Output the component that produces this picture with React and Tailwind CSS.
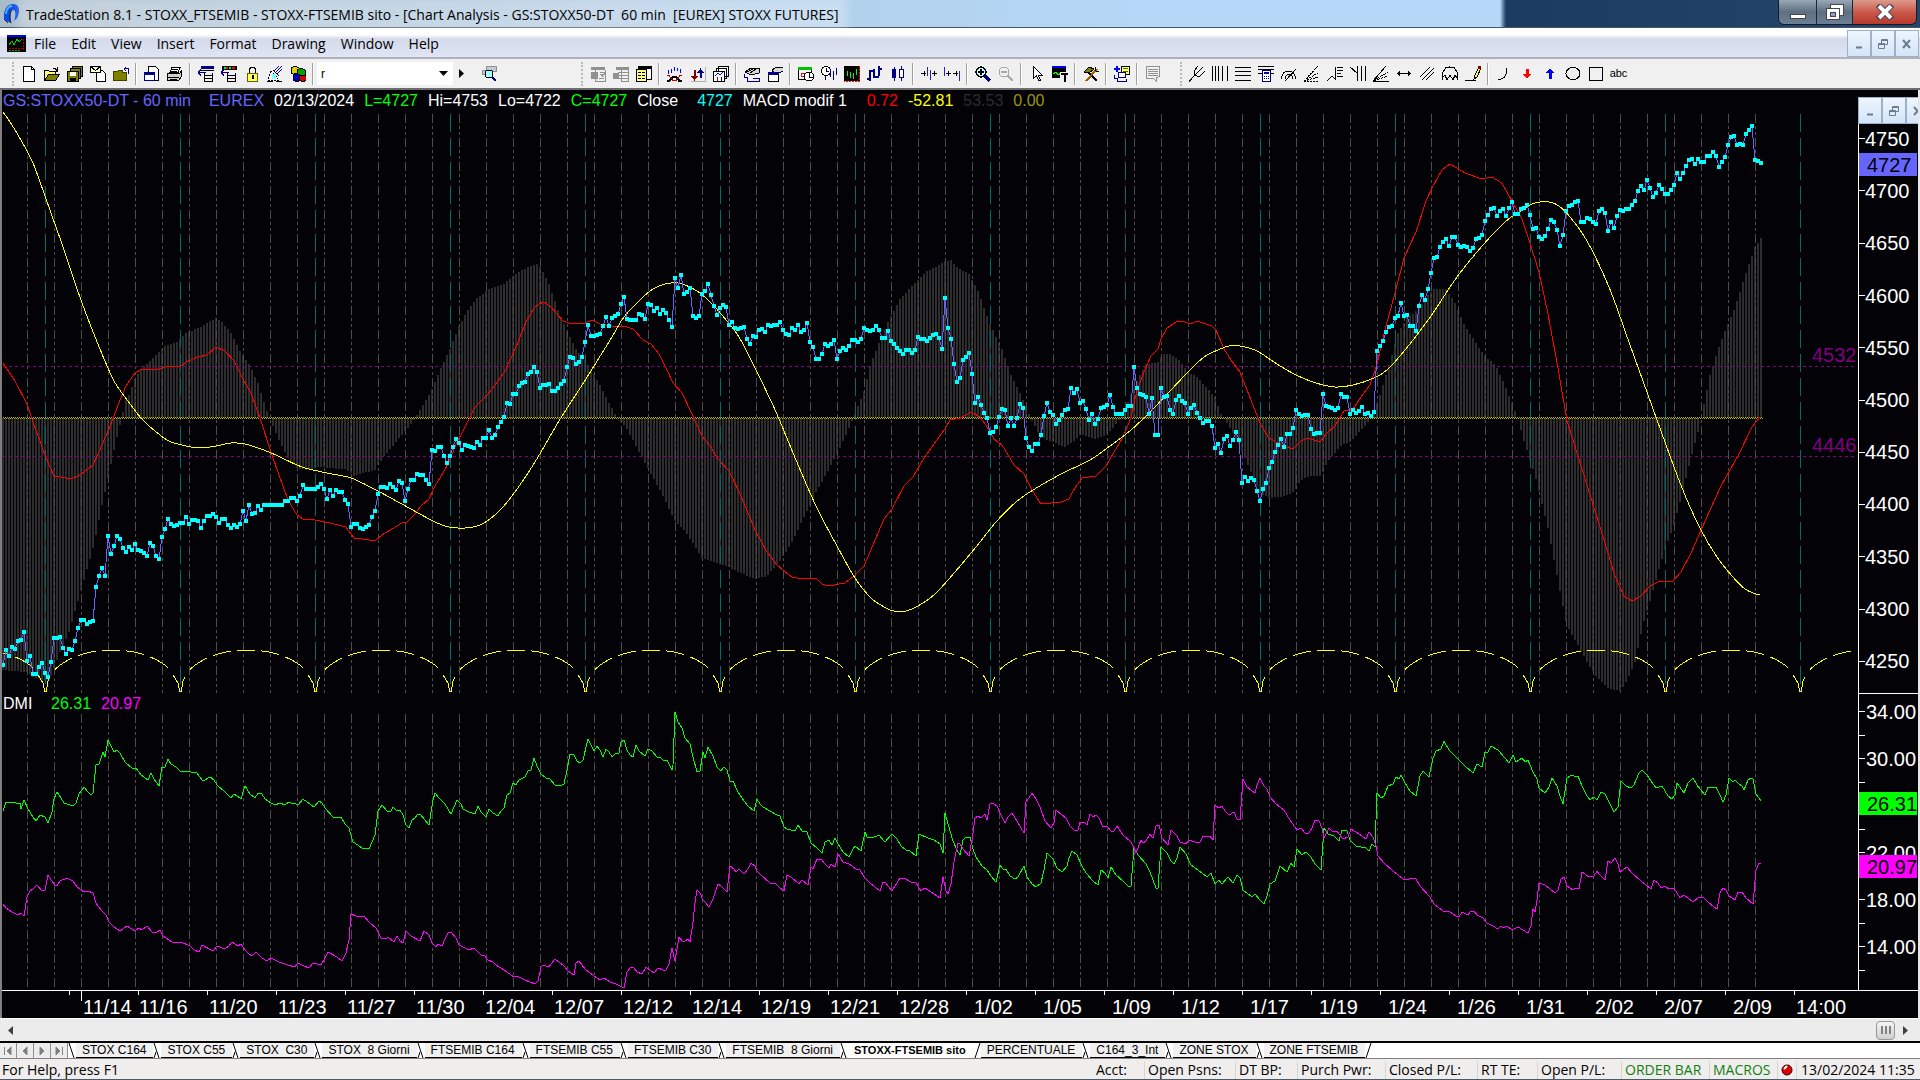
import React from 'react';
import clsx from 'clsx';

/* ---------- chart data ---------- */

// hourly close, one value per bar, 10 bars per line
const closeBars = [
  665, 650, 656, 647, 649, 641, 640, 632, 661, 656,
  674, 674, 667, 663, 673, 677, 662, 638, 638, 637,
  648, 654, 649, 650, 641, 628, 620, 620, 624, 622,
  621, 587, 576, 568, 576, 536, 554, 546, 536, 539,
  548, 552, 547, 550, 544, 550, 551, 553, 556, 543,
  546, 556, 559, 537, 529, 519, 524, 526, 525, 523,
  523, 517, 524, 520, 520, 521, 528, 521, 516, 516,
  514, 517, 523, 519, 519, 525, 528, 525, 527, 524,
  511, 521, 505, 514, 513, 506, 510, 505, 505, 505,
  505, 505, 505, 505, 501, 501, 498, 498, 501, 496,
  485, 489, 489, 489, 489, 487, 484, 489, 499, 490,
  496, 490, 492, 492, 500, 504, 527, 524, 524, 528,
  529, 527, 525, 517, 511, 494, 487, 487, 488, 484,
  487, 490, 481, 483, 501, 489, 480, 480, 474, 475,
  475, 480, 484, 450, 451, 447, 447, 456, 463, 456,
  447, 439, 443, 450, 445, 446, 447, 448, 442, 445,
  438, 438, 430, 438, 435, 427, 422, 417, 403, 404,
  394, 394, 386, 383, 382, 374, 372, 367, 372, 388,
  385, 385, 384, 391, 391, 388, 384, 381, 367, 357,
  358, 364, 362, 357, 342, 325, 336, 336, 335, 334,
  326, 317, 326, 318, 316, 314, 304, 297, 319, 320,
  320, 320, 314, 315, 319, 304, 305, 311, 308, 314,
  310, 313, 320, 327, 278, 288, 275, 294, 292, 288,
  316, 318, 316, 294, 291, 284, 295, 306, 315, 308,
  305, 307, 325, 322, 328, 329, 328, 327, 339, 344,
  336, 337, 330, 329, 332, 325, 326, 325, 325, 322,
  330, 334, 335, 328, 330, 325, 332, 330, 323, 342,
  347, 359, 359, 354, 344, 346, 344, 340, 359, 351,
  348, 350, 346, 340, 340, 342, 339, 328, 330, 331,
  330, 326, 330, 338, 338, 331, 341, 344, 348, 351,
  354, 350, 350, 353, 350, 337, 339, 339, 341, 338,
  335, 334, 338, 349, 298, 328, 339, 364, 382, 378,
  360, 357, 353, 374, 403, 397, 405, 413, 418, 433,
  432, 427, 417, 409, 410, 426, 418, 426, 418, 404,
  408, 438, 447, 451, 444, 444, 435, 416, 403, 412,
  415, 424, 420, 415, 410, 409, 388, 393, 389, 403,
  401, 409, 420, 414, 424, 419, 408, 407, 405, 395,
  407, 414, 414, 414, 410, 406, 406, 367, 388, 394,
  395, 397, 414, 398, 435, 435, 388, 397, 396, 410,
  414, 400, 396, 401, 403, 414, 408, 405, 413, 418,
  423, 421, 421, 426, 448, 444, 453, 439, 436, 446,
  440, 432, 440, 483, 477, 481, 478, 480, 491, 501,
  489, 483, 468, 462, 452, 445, 439, 447, 434, 434,
  428, 410, 414, 416, 415, 415, 429, 434, 433, 433,
  394, 406, 407, 408, 410, 408, 394, 397, 397, 414,
  410, 413, 411, 407, 414, 413, 416, 412, 351, 346,
  341, 332, 327, 326, 318, 316, 303, 316, 315, 326,
  326, 331, 306, 295, 300, 289, 273, 258, 257, 247,
  242, 239, 246, 237, 237, 245, 247, 246, 247, 251,
  248, 239, 238, 235, 221, 215, 209, 208, 216, 211,
  209, 216, 208, 202, 214, 214, 209, 208, 205, 215,
  229, 228, 237, 239, 236, 229, 220, 222, 230, 246,
  235, 211, 206, 205, 202, 201, 222, 222, 218, 219,
  222, 224, 211, 209, 213, 231, 222, 228, 216, 210,
  211, 209, 209, 205, 201, 191, 186, 190, 180, 188,
  197, 193, 185, 189, 194, 194, 190, 185, 173, 179,
  173, 166, 160, 159, 164, 159, 162, 162, 156, 156,
  152, 156, 167, 162, 157, 145, 137, 136, 145, 144,
  145, 134, 130, 126, 160, 161, 163,
];

const histPoints = [
  [3, 670], [27, 672], [35, 678], [41, 680], [48, 681], [54, 668], [60, 652], [69, 632], [75, 611], [81, 590], [87, 569],
  [93, 548], [96, 535], [99, 520], [102, 505], [105, 492], [108, 478], [111, 464], [114, 450], [117, 437],
  [120, 425], [123, 412], [126, 400], [129, 395], [135, 379], [141, 369], [150, 361], [165, 346], [177, 342],
  [186, 333], [201, 327], [210, 321], [216, 318], [222, 322], [231, 333], [240, 351], [249, 364], [258, 383],
  [264, 402], [269, 417], [276, 433], [282, 446], [288, 458], [297, 468], [306, 470], [320, 467], [339, 469],
  [346, 469], [354, 476], [363, 473], [375, 470], [384, 456], [396, 442], [412, 423], [416, 417], [426, 400],
  [432, 389], [441, 368], [450, 349], [459, 326], [469, 308], [477, 298], [489, 289], [504, 284], [514, 275],
  [528, 267], [537, 264], [541, 268], [549, 284], [558, 310], [567, 331], [576, 349], [585, 360], [594, 374],
  [604, 393], [616, 416], [627, 429], [636, 446], [648, 468], [660, 490], [675, 521], [686, 532], [702, 558],
  [720, 564], [729, 567], [743, 574], [756, 579], [767, 576], [780, 561], [792, 542], [804, 517], [816, 492],
  [828, 471], [841, 446], [852, 421], [858, 406], [864, 391], [870, 366], [877, 348], [888, 322], [900, 299],
  [912, 286], [926, 272], [941, 264], [945, 261], [951, 260], [957, 267], [969, 274], [978, 291], [990, 324],
  [1002, 349], [1011, 375], [1020, 393], [1026, 406], [1032, 421], [1041, 437], [1053, 442], [1065, 447],
  [1073, 442], [1081, 434], [1096, 439], [1108, 434], [1118, 421], [1124, 414], [1128, 402], [1137, 381],
  [1146, 364], [1158, 362], [1163, 354], [1171, 354], [1179, 360], [1188, 372], [1197, 377], [1204, 385],
  [1215, 397], [1221, 414], [1230, 428], [1240, 446], [1249, 467], [1260, 494], [1270, 498], [1285, 496],
  [1294, 492], [1301, 480], [1309, 476], [1321, 476], [1327, 463], [1340, 446], [1350, 442], [1363, 428],
  [1372, 418], [1379, 398], [1390, 362], [1398, 333], [1407, 318], [1418, 310], [1426, 297], [1434, 289],
  [1446, 289], [1455, 303], [1465, 326], [1483, 354], [1496, 366], [1504, 383], [1513, 406], [1518, 418],
  [1524, 441], [1535, 475], [1548, 528], [1559, 586], [1567, 626], [1578, 645], [1587, 662], [1596, 676],
  [1609, 689], [1621, 691], [1628, 678], [1635, 662], [1643, 624], [1652, 594], [1663, 555], [1674, 525],
  [1682, 494], [1693, 450], [1699, 428], [1704, 404], [1710, 375], [1721, 341], [1734, 310], [1747, 270],
  [1755, 247], [1761, 238],
];

const macdRed = [
  [3, 363], [15, 381], [27, 404], [33, 422], [41, 444], [46, 458], [54, 476], [61, 477], [71, 479], [80, 475],
  [93, 465], [99, 452], [108, 431], [114, 416], [120, 400], [126, 386], [135, 373], [142, 369], [150, 370],
  [159, 369], [168, 366], [180, 367], [186, 362], [198, 357], [207, 355], [216, 347], [225, 351], [234, 361],
  [243, 379], [251, 393], [261, 421], [271, 452], [279, 475], [288, 500], [297, 515], [303, 519], [315, 520],
  [330, 523], [346, 527], [354, 538], [369, 540], [375, 541], [382, 535], [392, 529], [402, 523], [407, 522],
  [414, 515], [421, 506], [429, 499], [435, 486], [443, 473], [449, 462], [456, 444], [463, 431], [475, 407],
  [488, 394], [504, 373], [516, 347], [526, 322], [534, 308], [539, 304], [544, 302], [551, 307], [563, 321],
  [569, 323], [576, 323], [585, 323], [592, 320], [600, 324], [612, 326], [624, 326], [633, 329], [643, 340],
  [651, 344], [659, 354], [667, 370], [673, 383], [682, 393], [692, 414], [702, 436], [710, 446], [718, 459],
  [729, 471], [741, 496], [756, 532], [767, 552], [776, 564], [784, 571], [792, 577], [802, 579], [816, 578],
  [822, 584], [828, 586], [845, 583], [853, 577], [864, 566], [870, 552], [884, 519], [892, 509], [904, 486],
  [913, 477], [924, 458], [939, 437], [945, 429], [950, 420], [961, 418], [971, 412], [980, 417], [986, 425],
  [994, 439], [1002, 445], [1014, 465], [1024, 474], [1032, 490], [1041, 504], [1061, 502], [1069, 499],
  [1073, 491], [1082, 478], [1096, 476], [1106, 466], [1114, 452], [1122, 439], [1131, 418], [1137, 390],
  [1144, 372], [1151, 356], [1158, 349], [1161, 339], [1167, 328], [1176, 322], [1182, 321], [1191, 324],
  [1197, 321], [1212, 326], [1216, 330], [1224, 349], [1231, 360], [1240, 372], [1249, 395], [1260, 423],
  [1268, 437], [1283, 446], [1293, 449], [1301, 441], [1308, 438], [1320, 442], [1327, 433], [1335, 426],
  [1344, 411], [1353, 409], [1361, 397], [1370, 385], [1377, 364], [1386, 326], [1395, 293], [1404, 258],
  [1416, 232], [1426, 201], [1433, 186], [1442, 170], [1450, 164], [1457, 168], [1465, 173], [1482, 179],
  [1492, 177], [1502, 183], [1513, 203], [1522, 219], [1529, 240], [1539, 272], [1548, 314], [1558, 368],
  [1567, 421], [1578, 456], [1591, 498], [1604, 540], [1615, 576], [1624, 596], [1632, 601], [1641, 596],
  [1650, 586], [1658, 582], [1673, 581], [1681, 572], [1691, 553], [1706, 519], [1721, 486], [1739, 454],
  [1752, 427], [1760, 417],
];

const macdYellow = [
  [3, 112], [12, 125], [22, 142], [33, 163], [45, 196], [63, 247], [82, 303], [102, 354], [114, 381], [125, 397],
  [141, 418], [155, 431], [169, 441], [186, 446], [200, 448], [216, 446], [231, 443], [245, 444], [261, 449],
  [278, 456], [302, 467], [327, 473], [351, 478], [376, 490], [400, 503], [433, 521], [449, 527], [465, 528],
  [480, 525], [496, 514], [512, 496], [535, 462], [559, 421], [584, 382], [612, 337], [624, 317], [641, 299],
  [653, 289], [665, 284], [678, 283], [692, 288], [706, 298], [722, 315], [739, 337], [757, 372], [776, 412],
  [796, 460], [816, 506], [837, 546], [855, 578], [871, 598], [886, 608], [894, 611], [906, 611], [918, 606],
  [935, 594], [955, 572], [976, 547], [996, 522], [1016, 502], [1033, 490], [1061, 474], [1090, 460],
  [1110, 446], [1131, 430], [1151, 411], [1171, 390], [1188, 372], [1204, 357], [1218, 350], [1229, 346],
  [1240, 346], [1257, 351], [1277, 364], [1296, 375], [1316, 383], [1335, 387], [1353, 385], [1374, 378],
  [1387, 370], [1400, 356], [1413, 340], [1431, 316], [1457, 277], [1483, 245], [1505, 222], [1522, 210],
  [1535, 203], [1549, 202], [1559, 206], [1570, 217], [1587, 241], [1609, 287], [1630, 345], [1652, 406],
  [1674, 467], [1687, 500], [1702, 532], [1717, 557], [1732, 576], [1745, 589], [1756, 594], [1760, 595],
];

const dmiPlus =
  '3,811 6,802 16,803 20,803 21,809 24,800 28,809 33,817 36,821 40,815 45,817 48,823 52,812 54,799 57,792 61,798 64,803 73,806 76,803 79,794 84,787 88,792 91,795 93,793 96,765 99,764 103,752 105,757 108,740 114,752 117,750 120,753 125,762 133,769 136,768 141,775 148,780 151,773 154,779 159,786 162,767 165,767 168,759 171,764 176,767 181,772 189,771 193,773 196,772 203,781 210,777 214,780 217,785 225,792 231,798 234,794 237,796 241,799 245,786 250,794 255,798 258,793 262,794 265,799 271,803 275,805 280,803 285,805 289,802 293,804 294,803 298,805 303,799 307,802 314,807 319,801 322,803 325,808 333,817 341,817 345,824 349,828 353,842 358,845 363,849 366,848 369,849 375,835 378,811 382,805 387,811 391,811 393,807 397,811 400,810 403,815 406,825 409,828 412,820 415,818 418,814 421,815 424,819 429,825 433,800 435,793 439,798 445,804 451,814 457,800 461,804 463,809 469,812 475,814 478,806 481,812 486,817 489,809 493,813 498,816 501,811 504,808 507,795 510,793 513,783 516,785 519,780 525,777 528,771 531,770 534,758 537,766 541,774 546,778 550,779 555,785 560,786 564,784 567,770 570,754 574,755 577,761 580,763 583,760 588,739 592,747 594,751 597,746 600,750 603,757 606,749 609,752 612,757 615,754 619,753 621,742 624,740 627,750 630,755 633,757 636,745 639,751 645,756 648,749 652,751 657,757 660,757 664,761 667,760 672,770 673,765 675,712 678,722 682,728 685,738 690,744 693,757 697,772 700,771 703,752 705,758 708,747 713,756 717,767 721,771 724,767 727,770 730,781 733,781 738,792 744,801 748,806 754,811 757,799 760,804 763,807 770,811 777,815 780,816 784,827 787,829 795,831 798,825 802,831 807,832 811,843 817,848 822,853 825,842 829,840 832,845 835,838 838,844 843,852 849,857 852,851 855,846 861,851 865,832 867,837 872,838 879,835 885,842 892,834 897,839 901,846 906,850 910,851 916,856 919,834 928,838 934,840 940,844 943,853 945,813 948,824 951,834 953,841 957,850 960,855 963,840 966,837 970,837 973,849 976,857 982,866 987,870 991,876 996,882 1000,865 1003,869 1006,869 1010,876 1015,879 1018,877 1024,866 1027,877 1032,884 1036,887 1041,883 1044,870 1047,853 1053,859 1057,868 1062,872 1067,866 1069,858 1072,851 1077,855 1081,864 1086,873 1093,881 1098,885 1101,870 1105,873 1108,878 1111,867 1116,875 1123,881 1128,886 1131,886 1134,848 1138,855 1146,864 1150,872 1153,880 1156,888 1158,888 1161,847 1167,853 1171,861 1174,864 1177,858 1180,847 1186,854 1191,865 1198,870 1207,877 1211,873 1215,884 1219,880 1222,884 1228,877 1233,883 1237,875 1240,878 1243,890 1252,897 1255,894 1260,900 1264,904 1267,896 1270,884 1275,881 1280,866 1287,872 1291,863 1294,867 1297,849 1302,855 1306,852 1311,857 1315,864 1321,870 1324,828 1328,834 1334,836 1339,841 1342,830 1347,831 1350,840 1356,846 1366,848 1369,851 1372,844 1375,847 1377,793 1381,798 1384,796 1388,786 1393,784 1396,777 1399,779 1401,775 1405,783 1410,791 1416,796 1420,776 1423,771 1429,777 1433,758 1436,751 1441,749 1444,741 1449,750 1457,758 1465,766 1473,773 1477,764 1482,767 1485,752 1488,752 1491,746 1498,750 1505,758 1509,763 1513,755 1516,762 1522,758 1525,762 1528,760 1533,772 1537,779 1539,788 1545,793 1549,787 1552,778 1557,786 1560,796 1563,804 1567,778 1572,775 1576,777 1578,776 1582,786 1587,796 1590,800 1594,797 1597,800 1601,792 1605,794 1609,802 1614,812 1618,807 1621,781 1626,786 1631,788 1634,785 1639,773 1642,770 1647,775 1651,781 1656,788 1662,786 1668,796 1672,799 1675,795 1677,783 1684,793 1688,783 1693,778 1697,785 1700,789 1705,795 1708,787 1716,787 1720,795 1723,802 1726,795 1729,778 1733,782 1735,780 1739,784 1742,786 1744,790 1748,780 1751,778 1753,779 1756,794 1761,801';

const dmiMinus =
  '3,904 6,908 12,912 18,915 21,913 24,916 27,897 30,891 33,889 37,885 42,891 45,890 48,875 51,880 55,885 57,886 60,881 67,878 73,881 77,887 84,892 88,891 93,893 96,903 101,910 106,915 109,922 114,927 120,931 127,926 135,931 139,928 142,930 147,926 152,932 157,932 160,930 163,936 172,942 178,943 181,942 190,946 194,950 199,952 202,945 211,950 214,950 217,946 225,949 229,946 232,942 238,946 241,944 245,950 249,954 252,956 256,952 262,958 267,961 271,958 279,962 288,965 295,967 298,963 304,966 309,968 313,963 321,965 325,958 328,952 337,957 342,961 346,953 349,940 351,914 356,916 364,916 370,923 376,928 381,938 386,939 388,937 394,942 397,936 400,941 403,943 406,931 411,936 420,941 424,931 429,935 432,943 436,947 438,944 442,946 445,939 448,933 451,932 456,938 459,945 469,950 474,948 481,955 484,955 488,960 493,962 496,965 504,970 514,977 517,976 525,980 535,984 538,981 541,967 543,965 549,967 555,959 564,966 568,971 574,975 576,963 579,961 585,969 594,976 600,980 604,978 610,982 616,984 624,988 627,972 631,967 634,968 637,972 642,974 646,967 651,971 654,973 658,968 663,970 666,970 669,964 672,948 675,961 677,949 679,937 682,941 684,942 688,939 690,942 693,922 695,903 697,890 700,893 703,900 706,903 709,907 713,899 718,884 721,886 727,892 730,866 734,869 736,872 739,869 744,874 748,869 751,863 755,866 757,871 761,875 770,883 775,883 780,888 784,891 787,875 791,877 799,884 802,880 808,885 811,867 813,869 817,859 822,860 825,864 829,868 831,864 835,867 838,854 843,862 849,864 856,869 860,870 864,877 870,883 880,891 883,882 885,882 892,891 895,886 900,878 904,878 911,882 916,883 921,891 925,888 934,894 940,898 943,877 946,891 948,894 951,884 954,862 958,843 960,844 963,849 969,856 972,840 975,818 978,816 981,818 985,814 987,820 990,804 993,803 997,806 1001,815 1005,823 1008,817 1012,813 1017,821 1021,828 1024,833 1026,802 1029,798 1032,793 1036,799 1040,807 1045,821 1051,828 1054,823 1056,810 1062,815 1066,818 1070,826 1075,831 1078,830 1080,822 1084,822 1087,825 1090,814 1093,817 1096,815 1099,818 1103,827 1107,826 1111,831 1114,831 1117,826 1123,835 1131,842 1134,848 1136,853 1141,840 1143,843 1146,841 1150,834 1153,838 1156,826 1159,825 1162,838 1168,845 1171,830 1177,836 1180,842 1186,844 1189,840 1195,842 1200,842 1203,836 1210,836 1213,840 1215,805 1219,808 1222,806 1225,811 1229,815 1234,812 1237,819 1240,820 1243,779 1247,787 1255,793 1257,785 1260,778 1264,786 1267,789 1270,797 1276,804 1284,810 1290,820 1297,830 1301,828 1305,833 1309,833 1312,828 1315,820 1319,821 1322,828 1324,838 1329,828 1333,832 1337,831 1343,839 1348,837 1351,829 1359,834 1366,839 1369,832 1373,837 1376,846 1378,856 1384,863 1393,871 1403,879 1407,880 1411,878 1416,879 1420,886 1430,897 1434,904 1443,911 1450,912 1456,916 1459,917 1462,912 1468,915 1471,911 1474,911 1477,915 1483,918 1487,923 1493,926 1498,929 1501,926 1503,928 1507,926 1512,930 1518,927 1528,933 1531,926 1533,909 1535,912 1537,900 1539,883 1545,885 1555,893 1558,890 1561,879 1564,877 1567,886 1573,890 1575,888 1579,889 1582,872 1589,877 1594,876 1597,871 1600,875 1605,880 1608,861 1611,863 1615,858 1618,864 1620,872 1627,867 1632,873 1641,881 1651,889 1654,880 1658,883 1661,888 1665,886 1669,889 1674,888 1680,898 1684,895 1693,902 1699,897 1704,898 1709,903 1717,909 1720,893 1723,888 1726,890 1729,896 1735,900 1738,892 1742,892 1746,898 1753,904 1756,870 1759,863 1761,864';

const priceTicks = ['4750', '4700', '4650', '4600', '4550', '4500', '4450', '4400', '4350', '4300', '4250'];
const dmiTicks = ['34.00', null, '30.00', null, null, null, '22.00', null, '18.00', null, '14.00', null];
const dates = [
  '11/16', '11/20', '11/23', '11/27', '11/30', '12/04', '12/07', '12/12', '12/14', '12/19', '12/21', '12/28',
  '1/02', '1/05', '1/09', '1/12', '1/17', '1/19', '1/24', '1/26', '1/31', '2/02', '2/07', '2/09', '14:00',
];

const range = (n) => Array.from({ length: n }, (_, i) => i);
const toPoints = (pts) => pts.map((p) => p.join(',')).join(' ');

const valueAt = (pts, x) => {
  const i = pts.findIndex((p) => p[0] >= x);
  if (i <= 0) return pts[0][1];
  const [x0, y0] = pts[i - 1];
  const [x1, y1] = pts[i];
  return Math.round(y0 + ((y1 - y0) * (x - x0)) / (x1 - x0));
};

const smoothPath = (p) => {
  let d = `M${p[0][0]} ${p[0][1]}`;
  for (let i = 0; i < p.length - 1; i++) {
    const a = p[i - 1] || p[i];
    const b = p[i];
    const c = p[i + 1];
    const e = p[i + 2] || c;
    d += `C${b[0] + (c[0] - a[0]) / 6} ${b[1] + (c[1] - a[1]) / 6} ${c[0] - (e[0] - b[0]) / 6} ${c[1] - (e[1] - b[1]) / 6} ${c[0]} ${c[1]}`;
  }
  return d;
};

// dashed half ellipses of the 5 day cycle
const cycleDashes = [[10, 27], [33, 51], [57, 75], [81, 99], [105, 123]];
const cyclePath = () => {
  let d = '';
  for (let c = -90; c < 1860; c += 135) {
    cycleDashes.forEach(([from, to]) => {
      for (let o = from; o <= to; o += 1) {
        const x = c + o;
        if (x < 3 || x > 1852) continue;
        const y = 691 - 41 * Math.sqrt(1 - ((o - 67.5) / 67.5) ** 2);
        d += `${o === from || x === 3 ? 'M' : 'L'}${x} ${y.toFixed(1)}`;
      }
    });
    const v = c + 135;
    if (v < 1852) d += `M${v - 7} 675L${v - 2} 683V687L${v - 1} 688V691H${v + 1}V688L${v + 2} 687V683L${v + 5} 677`;
  }
  return d;
};

function Chart() {
  const bars = closeBars.map((y, i) => [3 * (i + 1), y]);
  return (
    <svg viewBox="2 110 1916 908" className="block w-full h-auto" fill="none" shapeRendering="crispEdges"
         role="img" aria-label="STOXX50 60 min">
      {/* histogram */}
      <g fill="#2d2d2d">
        {range(587).map((i) => {
          const x = 3 * (i + 1);
          const y = valueAt(histPoints, x);
          return <rect key={i} x={x - 1} y={Math.min(y, 418)} width="2" height={Math.abs(y - 418)} />;
        })}
      </g>

      {/* day and week grid */}
      <g stroke="#4d4d4d">
        {range(65).map((i) => (
          <g key={i}>
            <path d={`M${27 * (i + 1) + 0.5} 114V693`} strokeDasharray="9 3 3 3 3 3" />
            <path d={`M${27 * (i + 1) + 0.5} 714V987`} strokeDasharray="9 3 3 3 3 3" />
          </g>
        ))}
      </g>
      <g stroke="#006b6b">
        {range(14).map((i) => (
          <path key={i} d={`M${45 + 135 * i + 0.5} 114V690`} strokeDasharray="18 6" />
        ))}
      </g>

      {/* levels */}
      <path d="M3 366.5H1856M3 456.5H1856" stroke="#800080" strokeDasharray="3 3" />
      <path d="M3 417.5H1763" stroke="#b8b000" strokeDasharray="1 1" />
      <path d="M4 418.5H1763" stroke="#b8b000" strokeDasharray="1 1" />

      <polyline points={toPoints(macdRed)} stroke="#f00" />
      <path d={smoothPath(macdYellow)} stroke="#ff0" />
      <path d={cyclePath()} stroke="#ff0" />
      <polyline points={toPoints(bars)} stroke="#6666ff" />
      <path d={bars.map(([x, y]) => `M${x - 2} ${y}h4`).join('')} stroke="#0ff" strokeWidth="4" />

      <polyline points={dmiPlus} stroke="#0f0" />
      <polyline points={dmiMinus} stroke="#f0f" />

      {/* axes */}
      <g stroke="#fff">
        <path d="M1858.5 110V990M2 990.5H1918M1858 693.5H1918" />
        {range(11).map((i) => (
          <path key={i} d={`M1859 ${Math.round(138 + 52.3 * i) + 0.5}h6`} />
        ))}
        {dmiTicks.map((t, i) => (
          <path key={i} d={`M1859 ${Math.round(711 + 23.5 * i) + 0.5}h6`} />
        ))}
        {range(26).map((i) => (
          <path key={i} d={`M${69 * (i + 1) + 0.5} 991v4`} />
        ))}
        <path d="M81.5 991v10" />
      </g>
      <rect x="1859" y="153" width="58" height="23" fill="#6666ff" />

      <g className="font-['Liberation_Sans',sans-serif] text-[20px]" fill="#fff">
        {priceTicks.map((t, i) => (
          <text key={t} x="1865" y={Math.round(146 + 52.2 * i)}>{t}</text>
        ))}
        {dmiTicks.map((t, i) => t && (
          <text key={t} x="1866" y={Math.round(719 + 23.5 * i)}>{t}</text>
        ))}
        <text x="83" y="1014">11/14</text>
        {dates.map((t, i) => (
          <text key={t} x={69 * (i + 1) + (i === 0 ? 70 : i > 11 && i < 24 ? 77 : 71)} y="1014">{t}</text>
        ))}
        <g fill="#800080">
          <text x="1812" y="362">4532</text>
          <text x="1812" y="452">4446</text>
        </g>
        <rect x="1859" y="792" width="58" height="23" fill="#0f0" />
        <rect x="1859" y="855" width="58" height="23" fill="#f0f" />
        <g fill="#000">
          <text x="1867" y="172">4727</text>
          <text x="1867" y="811">26.31</text>
          <text x="1867" y="874">20.97</text>
        </g>
      </g>
      <g className="font-['Liberation_Sans',sans-serif] text-[16px]">
        <text x="3" y="709" fill="#fff">DMI</text>
        <text x="51" y="709" fill="#0f0">26.31</text>
        <text x="101" y="709" fill="#f0f">20.97</text>
      </g>
    </svg>
  );
}

/* ---------- toolbar icons, 16x16 ---------- */

const K = '#000';
const N = '#000080';
const G = '#909090';

const icons = {
  New: <path d="M2.5.5h8l3 3v12h-11zM10.500 .5v3h3" fill="#fff" stroke={K} />,
  Open: <><path d="M.5 14.500v-10h4l1 1h6v3" fill="#ffff80" stroke={K} /><path d="M.5 14.500l4-6h11l-4 6z" fill="#808000" stroke={K} /><path d="M9 2.500h2l2 2M13.500 1v4h-4" stroke={K} /></>,
  'Save All': <><path d="M5.500 .5h10v10h-10z" fill="#808000" stroke={K} /><path d="M3.500 2.500h10v10h-10z" fill="#808000" stroke={K} /><path d="M.5 5.500h11v10h-11z" fill="#808000" stroke={K} /><path d="M3 6h6v4h-6z" fill="#fff" /><path d="M3 12h6v3h-6z" fill={K} /></>,
  'New From Mail': <><path d="M6.500 4.500h6l3 3v8h-9z" fill="#fff" stroke={K} /><path d="M.5 .5h10v6h-10zM.5 .5l5 4l5-4" fill="#ffffc0" stroke={K} /></>,
  'Close Folder': <><path d="M.5 14.500v-9h4l1-1h4v2h4v8z" fill="#808000" stroke="#404000" /><path d="M15.500 8V2.500h-4M11 3l2-2M11 3l2 2" stroke={N} /></>,
  'Print Preview': <><path d="M4.500 .5h7l3 3v11h-10z" fill="#fff" stroke={K} /><path d="M.5 6.500h10v8h-10z" fill="#fff" stroke={N} /><path d="M1 7h10v2H1z" fill={N} /></>,
  Print: <><path d="M5 1.500h8l-2 5h-8z" fill="#fff" stroke={K} /><path d="M5 3.500h6M4 5.500h6" stroke={K} /><path d="M.5 7.500h12l2-3v6l-3 4h-11z" fill="#d0d0c0" stroke={K} /><path d="M1 11.500h11M3 13.500h7" stroke={K} /></>,
  'Insert Row': <><path d="M3 0h13v3H3z" fill={N} /><path d="M3 4.500h13M6 9.500h9M6 12.500h9M6.500 7v8.500h8V7" stroke={K} /><path d="M0 6.500h8M0 6.500l3-3M0 6.500l3 3" stroke={N} /></>,
  'Insert Symbol': <><path d="M1 0h15v4H1z" fill={K} /><path d="M3 1h2v2H3zM8 1h2v2H8z" fill="#0f0" /><path d="M5 1h2v2H5zM11 1h3v2h-3z" fill="#f00" /><path d="M6 9.500h9M6 12.500h9M6.500 7v8.500h8V7" stroke={K} /><path d="M0 6.500h8M0 6.500l3-3M0 6.500l3 3" stroke={N} /></>,
  Lock: <><path d="M5.500 7V3l2-2h2l2 2v4" stroke={K} /><path d="M3.500 7.500h10v8h-10z" fill="#ffff60" stroke="#606000" /><path d="M8 9h2v4H8z" fill={K} /></>,
  Satellite: <><path d="M15 0L8 7M15 3l-5 5M12 0L7 5" stroke={N} /><path d="M6 4l6 6" stroke={K} /><path d="M4 5L1 14M4 5l8 9M1 14.500h12" stroke={K} strokeDasharray="2 1" /><path d="M5 8h4v5H5z" fill="#80ffff" /><path d="M0 15.500h6M9 15.500h6" stroke={K} /></>,
  Cubes: <><path d="M1 2l4-2 4 2v5l-4 2-4-2z" fill="#e0d000" stroke={K} /><path d="M7 4l4-2 4 2v5l-4 2-4-2z" fill="#00a000" stroke={K} /><path d="M3 9l3-2 4 2v5l-3 2-4-2z" fill="#0000c0" stroke={K} /><path d="M9 10l3-1 4 1v4l-3 2-4-2z" fill="#d00000" stroke={K} /></>,
  'Symbol Lookup': <><path d="M5 .5h10v5H5zM1 4.500h10v4H1z" fill="#c8c8d8" stroke={G} /><circle cx="8" cy="8" r="4" fill="#a0ffff" stroke={K} /><path d="M11 11l4 4" stroke={N} strokeWidth="2" /></>,
  'Order Ticket': <><path d="M1 1h14v3H1zM1 6h7v7H1z" fill={G} /><path d="M5.500 4v11h10V4M9 13l5-1M10 6h4v2h-4l4 3" stroke={G} /></>,
  'Order List': <><path d="M3 1h13v3H3zM0 7h6v6H0z" fill={G} /><path d="M5 6.500h10M5 9.500h10M5 12.500h10M8.500 4v11h7V4" stroke={G} /></>,
  Matrix: <><path d="M2.500 .5h13v13h-13z" fill="#fff" stroke={K} /><path d="M2 0h14v3H2z" fill={K} /><path d="M.5 3.500h10v12h-10z" fill="#ffff80" stroke={K} /><path d="M2 6.500h3M2 9.500h3M2 12.500h3M6 6.500h3M6 9.500h3M6 12.500h3" stroke={K} /></>,
  'Insert Analysis': <><path d="M1.500 4v4M4.500 3v4M7.500 1v4M10.500 2v3M13.500 3v4" stroke="#00f" /><path d="M0 14.500h3l3-4h3l3 4h3" stroke={K} strokeWidth="2" /><path d="M0 9.500h2l4 5h3l4-5h2" stroke="#c00000" /></>,
  Strategy: <><path d="M4.500 4v8M2 10l2.500 3L7 10" stroke="#800000" strokeWidth="2" /><path d="M10.500 12V5M8 7l2.500-3L13 7" stroke={N} strokeWidth="2" /><path d="M1 15.500h14.500V1" stroke="#b0b0b0" /></>,
  'Format Windows': <><path d="M5.500 .5h10v10h-10zM3.500 2.500h10v10h-10z" fill="#fff" stroke={K} /><path d="M.5 5.500h11v10H.5z" fill="#fff" stroke={K} /><path d="M2 10l3-3 2 2 3-3" stroke="#00f" /><path d="M4.500 11v4" stroke="#c00000" /><path d="M8.500 11v4" stroke={N} /></>,
  'Format Symbol': <><path d="M1 6l6-4h8v5l-4 1H5z" fill="#d8d8d8" stroke={K} /><path d="M3 6l6-3M6 7l6-4" stroke={K} /><path d="M9 12.500h6.500v3H3.500V11h-3V8" stroke={N} /></>,
  'Format Analysis': <><path d="M5 4l5-3h6v4l-4 2H7z" fill="#d8d8d8" stroke={K} /><path d="M1.500 6.500h10v9h-10z" fill="#fff" stroke={K} /><path d="M1 6h11v3H1z" fill={N} /></>,
  'Session Time': <><path d="M.5 1.500h13v12H.5z" fill="#fff" stroke={K} /><path d="M0 1h14v3H0z" fill="#00c000" /><path d="M3 7h3v3H3z" stroke="#f00" /><circle cx="11" cy="10.500" r="4.500" fill="#fff" stroke={K} /><path d="M11.500 7v4h3" stroke={K} /></>,
  'Bar Interval': <><circle cx="5" cy="5" r="4.500" fill="#fff" stroke={K} /><path d="M5 2v3h3" stroke={K} /><path d="M9.500 3v8M12.500 5v9M15 2v7M4.500 10v4" stroke={N} /></>,
  'Bar Chart': <><path d="M0 0h16v15H0z" fill={K} /><path d="M3.500 5v5M6.500 6v6M9.500 7v6M12.500 3v6" stroke="#0f0" /><path d="M15.500 0v15.500H0" stroke="#f00" strokeDasharray="2 1" /></>,
  'Line Bars': <><path d="M3 4v11M7 3v9M12 0v10M0 13h3M3 5h4M7 11h5M12 3h3" stroke={N} strokeWidth="2" /></>,
  Candles: <><path d="M2 3h4v9H2z" fill={N} /><path d="M4 1v14M11.500 0v3M11.500 11v4" stroke={N} /><path d="M9.500 3.500h4v8h-4z" fill="#fff" stroke={N} /></>,
  'Decrease Spacing': <><path d="M6.500 1v9M9.500 4v10" stroke="#2020c0" /><path d="M0 7.500h5M3 5v5M16 7.500h-5M13 5v5" stroke={K} /></>,
  'Increase Spacing': <><path d="M.5 1v9M15.500 5v10" stroke="#2020c0" /><path d="M2 7.500h5M4 5v5M14 7.500H9M12 5v5" stroke={K} /></>,
  'Zoom In': <><circle cx="6" cy="6" r="5" fill="#c0ffff" stroke={K} strokeWidth="1.500" /><path d="M3 6h6M6 3v6" stroke={K} strokeWidth="2" /><path d="M10 10l5 5" stroke={N} strokeWidth="3" /></>,
  'Zoom Out': <><circle cx="6" cy="6" r="5" stroke="#a8a8a8" /><path d="M3 6h6" stroke="#a8a8a8" strokeWidth="2" /><path d="M10 10l5 5" stroke="#a8a8a8" strokeWidth="2" /></>,
  Pointer: <path d="M4.500 .5v12l3-3 2 5h2l-2-5h4z" fill="#fff" stroke={K} />,
  'Data Tip': <><path d="M0 0h14v12H0z" fill={K} /><path d="M0 0h14v2H0z" fill="#00f" /><path d="M1 8l3-2 2 3 3-2" stroke="#0f0" /><path d="M8 6h8v10H8z" fill="#efefef" /><path d="M9 8h7M12.500 8v8" stroke={K} strokeWidth="2" /></>,
  Tools: <><path d="M3 4l11 11" stroke={K} strokeWidth="2" /><path d="M1 6l5-5 5 2-5 4z" fill="#808000" stroke={K} /><path d="M14 3L3 15" stroke="#a06000" strokeWidth="2" /><path d="M12 5V1M13 5h3" stroke={K} /></>,
  'Add Workspace': <><path d="M7.500 .5h8v8h-8z" fill="#ffff80" stroke={K} /><path d="M9 2.500h5M9 5.500h5" stroke="#606000" /><path d="M3 0v6M0 3h6" stroke="#00f" strokeWidth="2" /><path d="M4.500 6.500h7v5h-7z" fill="#fff" stroke={N} /><path d="M.5 9v3h3v3h9v-2" stroke={N} /></>,
  Message: <path d="M1.500 .5h13v10l-3 1v4l-3-3h-7zM3 3.500h10M3 5.500h10M3 7.500h10M3 9.500h10" stroke={G} />,
  'Andrews Pitchfork': <path d="M0 15.500L7 8M9 0L5 5v3l3 2h3l5-5M7 8L14 1" stroke={K} />,
  'Vertical Lines': <path d="M.5 0v15M3.500 0v15M6.500 0v15M10.500 0v15M15.500 0v15" stroke={K} />,
  'Horizontal Lines': <path d="M0 1.500h16M0 5.500h16M0 9.500h16M0 14.500h16" stroke={K} />,
  Calculator: <><path d="M0 .5h16M0 3.500h16M0 7.500h4M12 7.500h4" stroke={K} /><path d="M4.500 4.500h8v11h-8z" fill="#fff" stroke={N} strokeWidth="1.500" /><path d="M6 6h5v2H6z" fill={N} /><path d="M6 10.500h6M6 12.500h6" stroke={N} strokeDasharray="1 1" /></>,
  'Fibonacci Arcs': <path d="M.5 13c0-5 3-8 8-8 3 0 6 3 6 8M4.500 13c0-3 1-5 4-5 2 0 3 2 3 5M4 15L15 3" stroke={K} />,
  'Gann Fan': <path d="M0 15L14 0M0 15l14-8M0 15l14-4M0 15.500h15" stroke={K} strokeDasharray="2 1" />,
  'Price Retracement': <path d="M0 15l5-5 3 3V1M10 1.500h6M10 4.500h6M10 7.500h4M10 10.500h6" stroke={K} />,
  'Time Retracement': <path d="M0 1l7 6M7.500 0v15M11.500 0v15M15.500 0v15" stroke={K} />,
  'Speed Fan': <><path d="M0 15L13 0M0 15.500h16" stroke={K} /><path d="M0 15l15-9M0 15l15-5" stroke={K} strokeDasharray="3 1" /></>,
  'Time Line': <path d="M1 7.500h14M3.500 5v5M12.500 5v5M2.500 6v3M13.500 6v3" stroke={K} />,
  'Parallel Lines': <path d="M1 11L11 1M3 14L15 2M7 14l8-8" stroke={K} />,
  'Cycle Lines': <path d="M.5 14V7l3-5 4-1 5 1 3 5v7M1 11l2-2 2 5 3-5 3 5 2-5 2 3" stroke={K} />,
  Pencil: <><path d="M0 14.500h11" stroke={K} /><path d="M9 13l1-4 4-8 2 1-4 9z" fill="#ffff40" stroke={K} /><path d="M13 0h3v3h-3z" fill="#800000" /></>,
  Arc: <path d="M2 13.500c6 0 9-4 9-12" stroke={K} />,
  'Down Arrow': <><path d="M8 3v7" stroke="#f00" strokeWidth="3" /><path d="M4 8h8l-4 5z" fill="#f00" /></>,
  'Up Arrow': <><path d="M8 6v7" stroke="#00f" strokeWidth="3" /><path d="M4 7h8l-4-5z" fill="#00f" /></>,
  Ellipse: <ellipse cx="8" cy="7.500" rx="7" ry="6" stroke={K} />,
  Rectangle: <path d="M1.500 1.500h13v13h-13z" stroke={K} />,
};

const fileTools = ['New', 'Open', 'Save All', 'New From Mail', 'Close Folder', '|', 'Print Preview', 'Print', '|', 'Insert Row', 'Insert Symbol', 'Lock', 'Satellite', 'Cubes', '|'];
const chartTools = [
  'Order Ticket', 'Order List', 'Matrix', '|', 'Insert Analysis', 'Strategy', 'Format Windows', '|',
  'Format Symbol', 'Format Analysis', '|', 'Session Time', 'Bar Interval', 'Bar Chart', 'Line Bars', 'Candles', '|',
  'Decrease Spacing', 'Increase Spacing', '|', 'Zoom In', 'Zoom Out', '|', 'Pointer', 'Data Tip', '|', 'Tools', '|',
  'Add Workspace', '|', 'Message',
];
const drawTools = [
  'Andrews Pitchfork', 'Vertical Lines', 'Horizontal Lines', 'Calculator', 'Fibonacci Arcs', 'Gann Fan',
  'Price Retracement', 'Time Retracement', 'Speed Fan', 'Time Line', 'Parallel Lines', 'Cycle Lines', 'Pencil', '|',
  'Arc', 'Down Arrow', 'Up Arrow', 'Ellipse', 'Rectangle',
];

function ToolButton({ name }) {
  return (
    <button type="button" aria-label={name} className="flex h-6 w-[23px] shrink-0 items-center justify-center">
      <svg viewBox="0 0 16 16" width="16" height="16" fill="none" shapeRendering="crispEdges">{icons[name]}</svg>
    </button>
  );
}

function Tools({ items }) {
  return items.map((name, i) =>
    name === '|'
      ? <span key={i} className="mx-[3px] h-[22px] w-0.5 shrink-0 border-l border-[#a0a0a0] bg-white" />
      : <ToolButton key={i} name={name} />
  );
}

function Grip() {
  return <span className="mr-[3px] h-6 w-0.5 shrink-0 border-l-2 border-dotted border-[#b4bcb4]" />;
}

const menus = ['File', 'Edit', 'View', 'Insert', 'Format', 'Drawing', 'Window', 'Help'];

function MdiButtons({ className }) {
  const shapes = {
    Minimize: <path d="M3 9.500h6" strokeWidth="2" />,
    Restore: <path d="M1.500 5.500h6v5h-6zM4.500 5V1.500h6v5H8M4 2.500h7M1 6.500h7" />,
    Close: <path d="M2 2l7 8M9 2l-7 8" strokeWidth="2" />,
  };
  return (
    <div className={clsx('flex shrink-0', className)}>
      {Object.keys(shapes).map((k) => (
        <button key={k} type="button" aria-label={k}
                className="flex w-6 shrink-0 items-center justify-center border border-[#9db0c8] bg-linear-to-b from-[#eef5fd] to-[#d3e5f8]">
          <svg viewBox="0 0 12 12" width="12" height="12" fill="none" stroke="#6b7c90">{shapes[k]}</svg>
        </button>
      ))}
    </div>
  );
}

const readout = [
  ['GS:STOXX50-DT - 60 min', 'text-[#6666ff] mr-[18px]'],
  ['EUREX', 'text-[#6666ff] mr-[10px]'],
  ['02/13/2024', 'text-white mr-[10px]'],
  ['L=4727', 'text-[#00ff00] mr-[10px]'],
  ['Hi=4753', 'text-white mr-[10px]'],
  ['Lo=4722', 'text-white mr-[10px]'],
  ['C=4727', 'text-[#00ff00] mr-[10px]'],
  ['Close', 'text-white mr-[19px]'],
  ['4727', 'text-[#00ffff] mr-[10px]'],
  ['MACD modif 1', 'text-white mr-[20px]'],
  ['0.72', 'text-[#ff0000] mr-[10px]'],
  ['-52.81', 'text-[#ffff00] mr-[10px]'],
  ['53.53', 'text-[#2d2d2d] mr-[10px]'],
  ['0.00', 'text-[#9a9410]'],
];

const sheets = [
  'STOX C164', 'STOX C55', 'STOX  C30', 'STOX  8 Giorni', 'FTSEMIB C164', 'FTSEMIB C55', 'FTSEMIB C30',
  'FTSEMIB  8 Giorni', 'STOXX-FTSEMIB sito', 'PERCENTUALE', 'C164_3_Int', 'ZONE STOX', 'ZONE FTSEMIB',
];

const statusCells = [
  ['Acct:', 'w-[52px]'],
  ['Open Psns:', 'w-[91px]'],
  ['DT BP:', 'w-[62px]'],
  ['Purch Pwr:', 'w-[88px]'],
  ['Closed P/L:', 'w-[92px]'],
  ['RT TE:', 'w-[60px]'],
  ['Open P/L:', 'w-[84px]'],
  ['ORDER BAR', 'w-[88px] text-[#118011]'],
  ['MACROS', 'w-[68px] text-[#118011]'],
];

function TitleBar() {
  return (
    <header className="flex h-7 items-start justify-between border-b border-[#4b5563] bg-linear-to-r from-[#a9bccb] via-[#b5d8f8] via-60% to-[#b5d8f8]">
      <div className="flex h-7 min-w-0 items-center pl-1">
        <svg viewBox="0 0 18 24" width="18" height="24" className="mr-1 shrink-0" fill="none">
          <path d="M0 18C-1 8 3 2 9 2c6 0 8 6 4 14l-3 3c2-6 2-11-1-11-3 0-3 6-2 13z" fill="#0a4be0" />
          <path d="M2 12c0-5 3-8 6-8" stroke="#4fb0ff" strokeWidth="2" />
          <path d="M7 21c-2-6-1-11 1-13M1 18l3 3" stroke="#111a33" />
        </svg>
        <h1 className="truncate bg-white/30 text-[14px] whitespace-pre text-black shadow-[0_0_10px_8px_rgba(255,255,255,0.3)]">
          TradeStation 8.1 - STOXX_FTSEMIB - STOXX-FTSEMIB sito - [Chart Analysis - GS:STOXX50-DT  60 min  [EUREX] STOXX FUTURES]
        </h1>
      </div>
      <div className="flex h-full w-[420px] shrink-0 justify-end bg-linear-to-r from-[#b5d8f8] via-[#1b3c60] via-[6px] to-[#24466c] pr-[3px]">
        <div className="flex h-[25px] overflow-hidden rounded-b-md border border-t-0 border-[#101c2c]">
          <button type="button" aria-label="Minimize" className="flex w-[38px] items-end justify-center border-r border-[#18283c] bg-linear-to-b from-[#9aa8b6] via-[#5e6f82] to-[#6c7f94] pb-[5px]">
            <span className="h-[5px] w-4 border border-[#444] bg-white" />
          </button>
          <button type="button" aria-label="Restore" className="flex w-9 items-center justify-center border-r border-[#18283c] bg-linear-to-b from-[#9aa8b6] via-[#5e6f82] to-[#6c7f94]">
            <svg viewBox="0 0 20 18" width="20" height="18" shapeRendering="crispEdges">
              <path d="M5.500 1.500h13v11h-13z" fill="#fff" stroke="#445" />
              <path d="M1.500 5.500h13v11h-13z" fill="#fff" stroke="#445" />
              <path d="M5.500 9.500h5v4h-5z" fill="#8aa0b8" stroke="#445" />
            </svg>
          </button>
          <button type="button" aria-label="Close" className="flex w-[63px] items-center justify-center bg-linear-to-b from-[#dc9a8c] via-[#c9594a] to-[#b8382a]">
            <svg viewBox="0 0 20 16" width="20" height="16" fill="none">
              <path d="M3 1l14 14M17 1L3 15" stroke="#445" strokeWidth="6" />
              <path d="M4 2l12 12M16 2L4 14" stroke="#fff" strokeWidth="4" />
            </svg>
          </button>
        </div>
      </div>
    </header>
  );
}

function MenuBar() {
  return (
    <nav className="flex h-[31px] items-stretch justify-between border-t border-b-2 border-t-white border-b-[#b0b2b8] bg-linear-to-b from-white from-20% via-[#d5daeb] via-35% to-[#e0e5f5]">
      <div className="flex items-center pl-[7px]">
        <svg viewBox="0 0 19 17" width="19" height="17" className="mr-2" fill="none" shapeRendering="crispEdges">
          <path d="M0 0h19v17H0z" fill="#000" />
          <path d="M0 0h19v2H0z" fill="#00f" />
          <path d="M2 10l3-4 2 4 3-6 2 3 3-3" stroke="#0c0" />
          <path d="M2 13h15M16.500 4v12" stroke="#a00" strokeDasharray="2 1" />
          <path d="M2 15.500h12" stroke="#0a0" strokeDasharray="2 1" />
        </svg>
        {menus.map((m) => (
          <button key={m} type="button" className="mr-[15px] text-[14px] text-black">{m}</button>
        ))}
      </div>
      <MdiButtons className="pt-px pr-px" />
    </nav>
  );
}

function ToolBar() {
  return (
    <div className="flex h-[31px] items-center border-b-2 border-b-[#6e6e6e] bg-[#f0f0f0]">
      <span className="w-3 shrink-0" />
      <Grip />
      <Tools items={fileTools} />
      <div className="relative flex h-[23px] w-[136px] shrink-0 items-center bg-white">
        <input aria-label="Symbol" defaultValue="r" className="h-full w-full bg-transparent pl-1 font-['Liberation_Sans',sans-serif] text-[12px] outline-none" />
        <svg viewBox="0 0 9 5" width="9" height="5" className="absolute right-[5px]"><path d="M0 0h9L4.500 5z" /></svg>
      </div>
      <button type="button" aria-label="Go" className="flex h-6 w-4 shrink-0 items-center justify-center">
        <svg viewBox="0 0 5 9" width="5" height="9"><path d="M0 0l5 4.500L0 9z" /></svg>
      </button>
      <span className="w-2 shrink-0" />
      <ToolButton name="Symbol Lookup" />
      <span className="w-[81px] shrink-0" />
      <Grip />
      <Tools items={chartTools} />
      <span className="w-4 shrink-0" />
      <Grip />
      <Tools items={drawTools} />
      <button type="button" className="w-[23px] shrink-0 text-center font-['Liberation_Sans',sans-serif] text-[11px]">abc</button>
    </div>
  );
}

function SheetTabs() {
  const nav = ['M2.500 2v8M9 2L5 6l4 4z', 'M8 2L4 6l4 4z', 'M4 2l4 4-4 4z', 'M9.500 2v8M3 2l4 4-4 4z'];
  return (
    <div className="flex h-[18px] items-stretch border-t-2 border-b border-t-black border-b-[#808080] bg-white">
      {nav.map((d, i) => (
        <button key={i} type="button" aria-label={['First', 'Previous', 'Next', 'Last'][i]}
                className="flex w-[17px] shrink-0 items-center justify-center border-r border-[#909090] bg-[#ececec]">
          <svg viewBox="0 0 12 12" width="12" height="12" fill="#808080" stroke="#808080"><path d={d} /></svg>
        </button>
      ))}
      <div role="tablist" className="flex font-['Liberation_Sans',sans-serif] text-[12px]">
        {sheets.map((s, i) => {
          const active = i === 8;
          return (
            <React.Fragment key={s}>
              <svg viewBox="0 0 8 15" width="8" height="15" className="shrink-0" fill="none" stroke="#000">
                <path d={i === 9 ? 'M7 0L2 15' : 'M1 0l5 15'} />
                {i > 0 && i !== 9 && <path d="M3 9l-2 6" />}
              </svg>
              <button type="button" role="tab" aria-selected={active}
                      className={clsx('shrink-0 pr-[7px] pl-1.5 leading-[15px] whitespace-pre text-black',
                        active ? 'bg-white text-[11px] font-bold' : 'border-b border-black bg-[#f0f0f0]')}>
                {s}
              </button>
            </React.Fragment>
          );
        })}
        <svg viewBox="0 0 8 15" width="8" height="15" fill="none" stroke="#000"><path d="M6 0L1 15" /></svg>
      </div>
    </div>
  );
}

export default function App() {
  return (
    <div className="w-full overflow-hidden bg-[#f0f0f0] font-['Open_Sans','Noto_Sans',sans-serif]">
      <TitleBar />
      <MenuBar />
      <ToolBar />

      <main className="relative border-x-2 border-l-[#808080] border-r-[#e8e8e8] bg-[#030307]">
        <div className="flex h-5 items-center pt-0.5 pl-px font-['Liberation_Sans',sans-serif] text-[16px] leading-5 whitespace-pre">
          {readout.map(([t, c]) => <span key={t} className={clsx('shrink-0', c)}>{t}</span>)}
        </div>
        <Chart />
        <div className="absolute top-[7px] right-0 w-[60px] overflow-hidden">
          <MdiButtons className="h-[27px]" />
        </div>
      </main>

      <div className="flex h-[23px] items-center justify-between border-t border-white bg-[#ececec] pr-3 pl-2">
        <button type="button" aria-label="Scroll left">
          <svg viewBox="0 0 5 9" width="5" height="9" fill="#404040"><path d="M5 0v9L0 4.500z" /></svg>
        </button>
        <div className="flex items-center">
          <button type="button" aria-label="Scroll position" className="mr-2 flex h-[19px] w-[19px] items-center justify-center gap-0.5 rounded-sm border border-[#979797] bg-linear-to-b from-[#f5f5f5] to-[#cfcfcf]">
            <span className="h-2 w-0.5 bg-[#808080]" />
            <span className="h-2 w-0.5 bg-[#808080]" />
            <span className="h-2 w-0.5 bg-[#808080]" />
          </button>
          <button type="button" aria-label="Scroll right">
            <svg viewBox="0 0 5 9" width="5" height="9" fill="#404040"><path d="M0 0v9l5-4.500z" /></svg>
          </button>
        </div>
      </div>

      <SheetTabs />

      <footer className="flex h-[21px] items-end justify-between border-b border-[#4a5a6a] bg-[#f0eded] text-[14px] leading-[18px] whitespace-nowrap text-black">
        <span className="pl-0.5">For Help, press F1</span>
        <div className="flex">
          {statusCells.map(([t, w]) => (
            <span key={t} className={clsx('shrink-0 border-r border-[#d8d4d4] pl-[3px]', w)}>{t}</span>
          ))}
          <span className="flex w-[19px] items-center justify-center border-r border-[#d8d4d4]">
            <svg viewBox="0 0 12 12" width="12" height="12">
              <circle cx="6" cy="6" r="5" fill="#e00000" stroke="#300" />
              <path d="M3 5l3-3" stroke="#fff" strokeWidth="2" />
            </svg>
          </span>
          <time className="w-[123px] pl-1">13/02/2024 11:35</time>
        </div>
      </footer>
    </div>
  );
}
